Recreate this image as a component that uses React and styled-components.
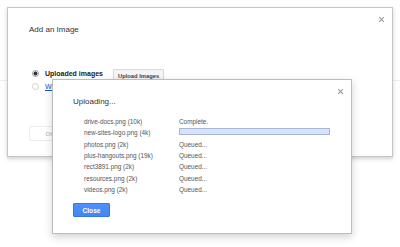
import React from "react";
import styled, { createGlobalStyle } from "styled-components";

const GlobalStyle = createGlobalStyle`
  body {
    margin: 0;
    background: #fff;
    font-family: "Liberation Sans", Arial, sans-serif;
  }
`;

// 업로드 목록 데이터
const files = [
  { name: "drive-docs.png (10k)", status: "done" },
  { name: "new-sites-logo.png (4k)", status: "progress" },
  { name: "photos.png (2k)", status: "queued" },
  { name: "plus-hangouts.png (19k)", status: "queued" },
  { name: "rect3891.png (2k)", status: "queued" },
  { name: "resources.png (2k)", status: "queued" },
  { name: "videos.png (2k)", status: "queued" },
];

const CloseIcon = () => (
  <svg width="7" height="7" viewBox="0 0 7 7">
    <path d="M1.2 1.2L5.8 5.8M5.8 1.2L1.2 5.8" stroke="#9a9a9a" strokeWidth="1.1" />
  </svg>
);

const App = () => {
  return (
    <Page>
      <GlobalStyle />
      <OuterDialog>
        <Header>
          <Title>Add an Image</Title>
          <CloseIcon />
        </Header>
        <RadioList>
          <RadioRow>
            <Radio checked />
            <RadioLabel>Uploaded images</RadioLabel>
            <GreyButton>Upload Images</GreyButton>
          </RadioRow>
          <RadioRow>
            <Radio />
            <LinkLabel>Web address (URL)</LinkLabel>
          </RadioRow>
        </RadioList>
        <OkButton>OK</OkButton>
      </OuterDialog>

      <UploadDialog>
        <Header inner>
          <Title>Uploading...</Title>
          <CloseIcon />
        </Header>
        <FileGrid>
          {files.map((file) => (
            <React.Fragment key={file.name}>
              <FileName>{file.name}</FileName>
              {file.status === "progress" ? (
                <ProgressCell>
                  <ProgressBar />
                </ProgressCell>
              ) : (
                <Status>{file.status === "done" ? "Complete." : "Queued..."}</Status>
              )}
            </React.Fragment>
          ))}
        </FileGrid>
        <BlueButton>Close</BlueButton>
      </UploadDialog>
    </Page>
  );
};

export default App;

const Page = styled.div`
  position: relative;
  width: 400px;
  height: 247px;
  box-sizing: border-box;
  padding: 7px;
  overflow: hidden;
  background: linear-gradient(#eeeeee, #eeeeee) 0 80px / 100% 1px no-repeat,
    #fff;
`;

const OuterDialog = styled.div`
  width: 386px;
  height: 150px;
  box-sizing: border-box;
  border: 1px solid #c6c6c6;
  background: rgba(255, 255, 255, 0.93);
  box-shadow: 0 2px 4px rgba(0, 0, 0, 0.18);
  display: flex;
  flex-direction: column;
`;

const Header = styled.div`
  display: flex;
  justify-content: space-between;
  align-items: flex-start;
  padding: 8px 7px 0 ${(props) => (props.inner ? "20px" : "21px")};
`;

const Title = styled.div`
  margin-top: 9px;
  font-size: 8px;
  line-height: 10px;
  color: #333;
`;

const RadioList = styled.div`
  display: flex;
  flex-direction: column;
  margin-top: 32px;
  padding-left: 24px;
`;

const RadioRow = styled.div`
  display: flex;
  align-items: center;
  height: 13px;
  gap: 6px;
`;

const Radio = styled.span`
  width: 7px;
  height: 7px;
  box-sizing: border-box;
  border-radius: 50%;
  border: 1px solid ${(props) => (props.checked ? "#9a9a9a" : "#cfcfcf")};
  background: ${(props) =>
    props.checked
      ? "radial-gradient(circle, #333 0 1.8px, #f4f4f4 2.2px)"
      : "#fff"};
`;

const RadioLabel = styled.span`
  font-size: 7px;
  font-weight: bold;
  color: #222;
`;

const LinkLabel = styled.span`
  font-size: 7px;
  color: #1155cc;
  text-decoration: underline;
`;

const GreyButton = styled.div`
  margin-left: 4px;
  margin-top: 4px;
  height: 14px;
  box-sizing: border-box;
  padding: 0 4px;
  display: flex;
  align-items: center;
  border: 1px solid #d8d8d8;
  border-radius: 1px;
  background: #f5f5f5;
  font-size: 5.8px;
  font-weight: bold;
  color: #444;
`;

const OkButton = styled.div`
  margin: 33px 0 0 21px;
  width: 42px;
  height: 15px;
  box-sizing: border-box;
  border: 1px solid #ececec;
  border-radius: 2px;
  display: flex;
  align-items: center;
  justify-content: center;
  font-size: 6px;
  font-weight: bold;
  color: #c4c4c4;
`;

const UploadDialog = styled.div`
  position: absolute;
  left: 52px;
  top: 79px;
  width: 300px;
  height: 155px;
  box-sizing: border-box;
  border: 1px solid #bdbdbd;
  background: #fff;
  box-shadow: 0 3px 8px rgba(0, 0, 0, 0.18);
  display: flex;
  flex-direction: column;
`;

const FileGrid = styled.div`
  display: grid;
  grid-template-columns: 95px 151px;
  grid-auto-rows: 11.3px;
  margin: 9px 0 0 31px;
  align-items: center;
`;

const FileName = styled.div`
  font-size: 6.4px;
  color: #555;
  white-space: nowrap;
`;

const Status = styled.div`
  font-size: 6.4px;
  color: #555;
  white-space: nowrap;
`;

const ProgressCell = styled.div`
  display: flex;
  align-items: flex-start;
  height: 100%;
`;

const ProgressBar = styled.div`
  margin-top: 0.6px;
  width: 151px;
  height: 7.5px;
  box-sizing: border-box;
  border: 1px solid #a9b6d1;
  background: #d4e2fb;
`;

const BlueButton = styled.div`
  margin: 8px 0 0 20px;
  width: 37px;
  height: 14px;
  box-sizing: border-box;
  border: 1px solid #3079ed;
  border-radius: 1px;
  background: linear-gradient(#4d90fe, #4787ed);
  display: flex;
  align-items: center;
  justify-content: center;
  font-size: 6.6px;
  font-weight: bold;
  color: #fff;
`;
